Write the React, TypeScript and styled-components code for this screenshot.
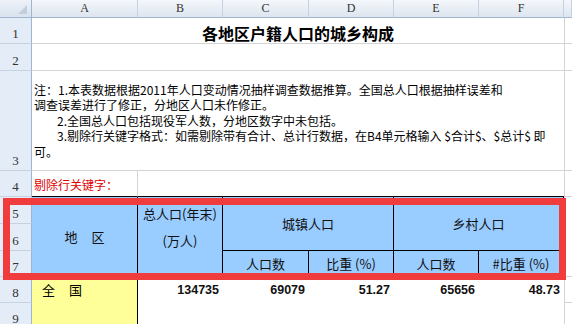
import React from "react";
import styled, { createGlobalStyle } from "styled-components";

const GlobalStyle = createGlobalStyle`
  html, body {
    margin: 0;
    padding: 0;
    background: #fff;
    overflow: hidden;
  }
  body {
    font-family: "Noto Sans CJK SC", "Liberation Sans", sans-serif;
    color: #000;
  }
`;

const letters = ["A", "B", "C", "D", "E", "F"];
const rowNums = [1, 2, 3, 4, 5, 6, 7, 8, 9];

const App = () => {
  return (
    <>
      <GlobalStyle />
      <Sheet>
        <Corner />
        {letters.map((l, i) => (
          <ColHead key={l} $area={`1 / ${i + 2}`}>
            {l}
          </ColHead>
        ))}
        <ColHead $area="1 / 8" />

        {rowNums.map((n) => (
          <RowHead key={n} $area={`${n + 1} / 1`}>
            {n}
          </RowHead>
        ))}

        <Title $area="2 / 2 / 3 / 8">各地区户籍人口的城乡构成</Title>
        <Blank $area="3 / 2 / 4 / 8" />
        <Note $area="4 / 2 / 5 / 8">
          <NoteLine>注：1.本表数据根据2011年人口变动情况抽样调查数据推算。全国总人口根据抽样误差和</NoteLine>
          <NoteLine>调查误差进行了修正，分地区人口未作修正。</NoteLine>
          <NoteLine $indent>2.全国总人口包括现役军人数，分地区数字中未包括。</NoteLine>
          <NoteLine $indent>3.剔除行关键字格式：如需剔除带有合计、总计行数据，在B4单元格输入 $合计$、$总计$ 即</NoteLine>
          <NoteLine>可。</NoteLine>
        </Note>
        <KeyLabel $area="5 / 2">剔除行关键字：</KeyLabel>
        <KeyInput $area="5 / 3 / 6 / 8" />

        <HeadCell $area="6 / 2 / 9 / 3" $align="center">
          <Spaced>地</Spaced>区
        </HeadCell>
        <HeadCell $area="6 / 3 / 9 / 4" $align="flex-start">
          <HeadLine>总人口(年末)</HeadLine>
          <HeadLine>(万人)</HeadLine>
        </HeadCell>
        <HeadCell $area="6 / 4 / 8 / 6" $align="center">城镇人口</HeadCell>
        <HeadCell $area="6 / 6 / 8 / 8" $align="center">乡村人口</HeadCell>
        <HeadCell $area="8 / 4" $align="center">人口数</HeadCell>
        <HeadCell $area="8 / 5" $align="center">比重 (%)</HeadCell>
        <HeadCell $area="8 / 6" $align="center">人口数</HeadCell>
        <HeadCell $area="8 / 7" $align="center">#比重 (%)</HeadCell>

        <Region $area="9 / 2">
          <Spaced>全</Spaced>国
        </Region>
        <Value $area="9 / 3">134735</Value>
        <Value $area="9 / 4">69079</Value>
        <Value $area="9 / 5">51.27</Value>
        <Value $area="9 / 6">65656</Value>
        <Value $area="9 / 7">48.73</Value>

        <Region $area="10 / 2" />
        <Plain $area="10 / 3 / 11 / 8" />

        <Outside $area="2 / 8" />
        <Outside $area="3 / 8" />
        <Outside $area="4 / 8" />
        <Outside $area="5 / 8" />
        <Outside $area="6 / 8 / 9 / 9" />
        <Outside $area="9 / 8" />
        <Outside $area="10 / 8" />

        <Highlight />
      </Sheet>
    </>
  );
};

export default App;

const Sheet = styled.div`
  position: relative;
  display: grid;
  grid-template-columns: 32px 106px 85px 86px 85px 85px 85px 1fr;
  grid-template-rows: 18px 26px 27px 100px 26px 27px 27px 26px 26px 26px;
  width: 572px;
  height: 324px;
  overflow: hidden;
`;

const Corner = styled.div`
  grid-area: 1 / 1;
  position: relative;
  box-sizing: border-box;
  background: linear-gradient(#eef2f8, #d9e2ee);
  border-right: 1px solid #9eb6ce;
  border-bottom: 1px solid #9eb6ce;
  &::after {
    content: "";
    position: absolute;
    right: 4px;
    bottom: 3px;
    border-left: 9px solid transparent;
    border-bottom: 9px solid #c3cddb;
  }
`;

const ColHead = styled.div<{ $area: string }>`
  grid-area: ${(p) => p.$area};
  box-sizing: border-box;
  display: flex;
  align-items: center;
  justify-content: center;
  background: linear-gradient(#f4f7fb, #dde5ef);
  border-right: 1px solid #c5d2e0;
  border-bottom: 1px solid #9eb6ce;
  font-family: "Liberation Serif", serif;
  font-size: 12px;
  color: #333;
`;

const RowHead = styled.div<{ $area: string }>`
  grid-area: ${(p) => p.$area};
  box-sizing: border-box;
  display: flex;
  align-items: flex-end;
  justify-content: center;
  padding-bottom: 1px;
  background: #e4ecf7;
  border-right: 1px solid #9eb6ce;
  border-bottom: 1px solid #c5d2e0;
  font-family: "Liberation Serif", serif;
  font-size: 13px;
  line-height: 16px;
  color: #333;
`;

const Blank = styled.div<{ $area: string }>`
  grid-area: ${(p) => p.$area};
  box-sizing: border-box;
  border-bottom: 1px solid #d4d4d4;
`;

const Outside = styled(Blank)`
  border-left: 1px solid #d4d4d4;
`;

const Plain = styled.div<{ $area: string }>`
  grid-area: ${(p) => p.$area};
`;

const Title = styled(Blank)`
  display: flex;
  align-items: flex-end;
  justify-content: center;
  padding-bottom: 1px;
  font-size: 16px;
  font-weight: 700;
  line-height: 17px;
`;

const Note = styled(Blank)`
  display: flex;
  flex-direction: column;
  justify-content: center;
  padding-left: 2px;
  font-size: 12px;
  line-height: 15.5px;
`;

const NoteLine = styled.div<{ $indent?: boolean }>`
  white-space: nowrap;
  padding-left: ${(p) => (p.$indent ? "23px" : "0")};
`;

const KeyLabel = styled.div<{ $area: string }>`
  grid-area: ${(p) => p.$area};
  box-sizing: border-box;
  display: flex;
  align-items: flex-end;
  padding: 0 0 2px 2px;
  border-right: 1px solid #d4d4d4;
  border-bottom: 1px solid #000;
  color: #e00000;
  font-size: 12px;
  line-height: 18px;
`;

const KeyInput = styled.div<{ $area: string }>`
  grid-area: ${(p) => p.$area};
  box-sizing: border-box;
  border-bottom: 1px solid #000;
`;

const HeadCell = styled.div<{ $area: string; $align: string }>`
  grid-area: ${(p) => p.$area};
  box-sizing: border-box;
  display: flex;
  flex-direction: ${(p) => (p.$align === "flex-start" ? "column" : "row")};
  align-items: center;
  justify-content: ${(p) => p.$align};
  padding-top: ${(p) => (p.$align === "flex-start" ? "3px" : "0")};
  background: #99ccff;
  border-right: 1px solid #000;
  border-bottom: 1px solid #000;
  font-size: 13px;
  color: #111;
  white-space: nowrap;
`;

const HeadLine = styled.div`
  line-height: 27px;
`;

const Spaced = styled.span`
  margin-right: 14px;
`;

const Region = styled.div<{ $area: string }>`
  grid-area: ${(p) => p.$area};
  box-sizing: border-box;
  display: flex;
  align-items: center;
  padding: 0 0 1px 10px;
  background: #ffff99;
  border-right: 1px solid #000;
  font-size: 13px;
`;

const Value = styled.div<{ $area: string }>`
  grid-area: ${(p) => p.$area};
  box-sizing: border-box;
  display: flex;
  align-items: center;
  justify-content: flex-end;
  padding: 0 4px 0 0;
  font-family: "Liberation Sans", Arial, sans-serif;
  font-size: 12.5px;
  font-weight: 700;
  color: #111;
`;

const Highlight = styled.div`
  position: absolute;
  left: 3px;
  top: 198px;
  width: 563px;
  height: 82px;
  box-sizing: border-box;
  border: 7px solid #f03c3c;
  pointer-events: none;
`;
